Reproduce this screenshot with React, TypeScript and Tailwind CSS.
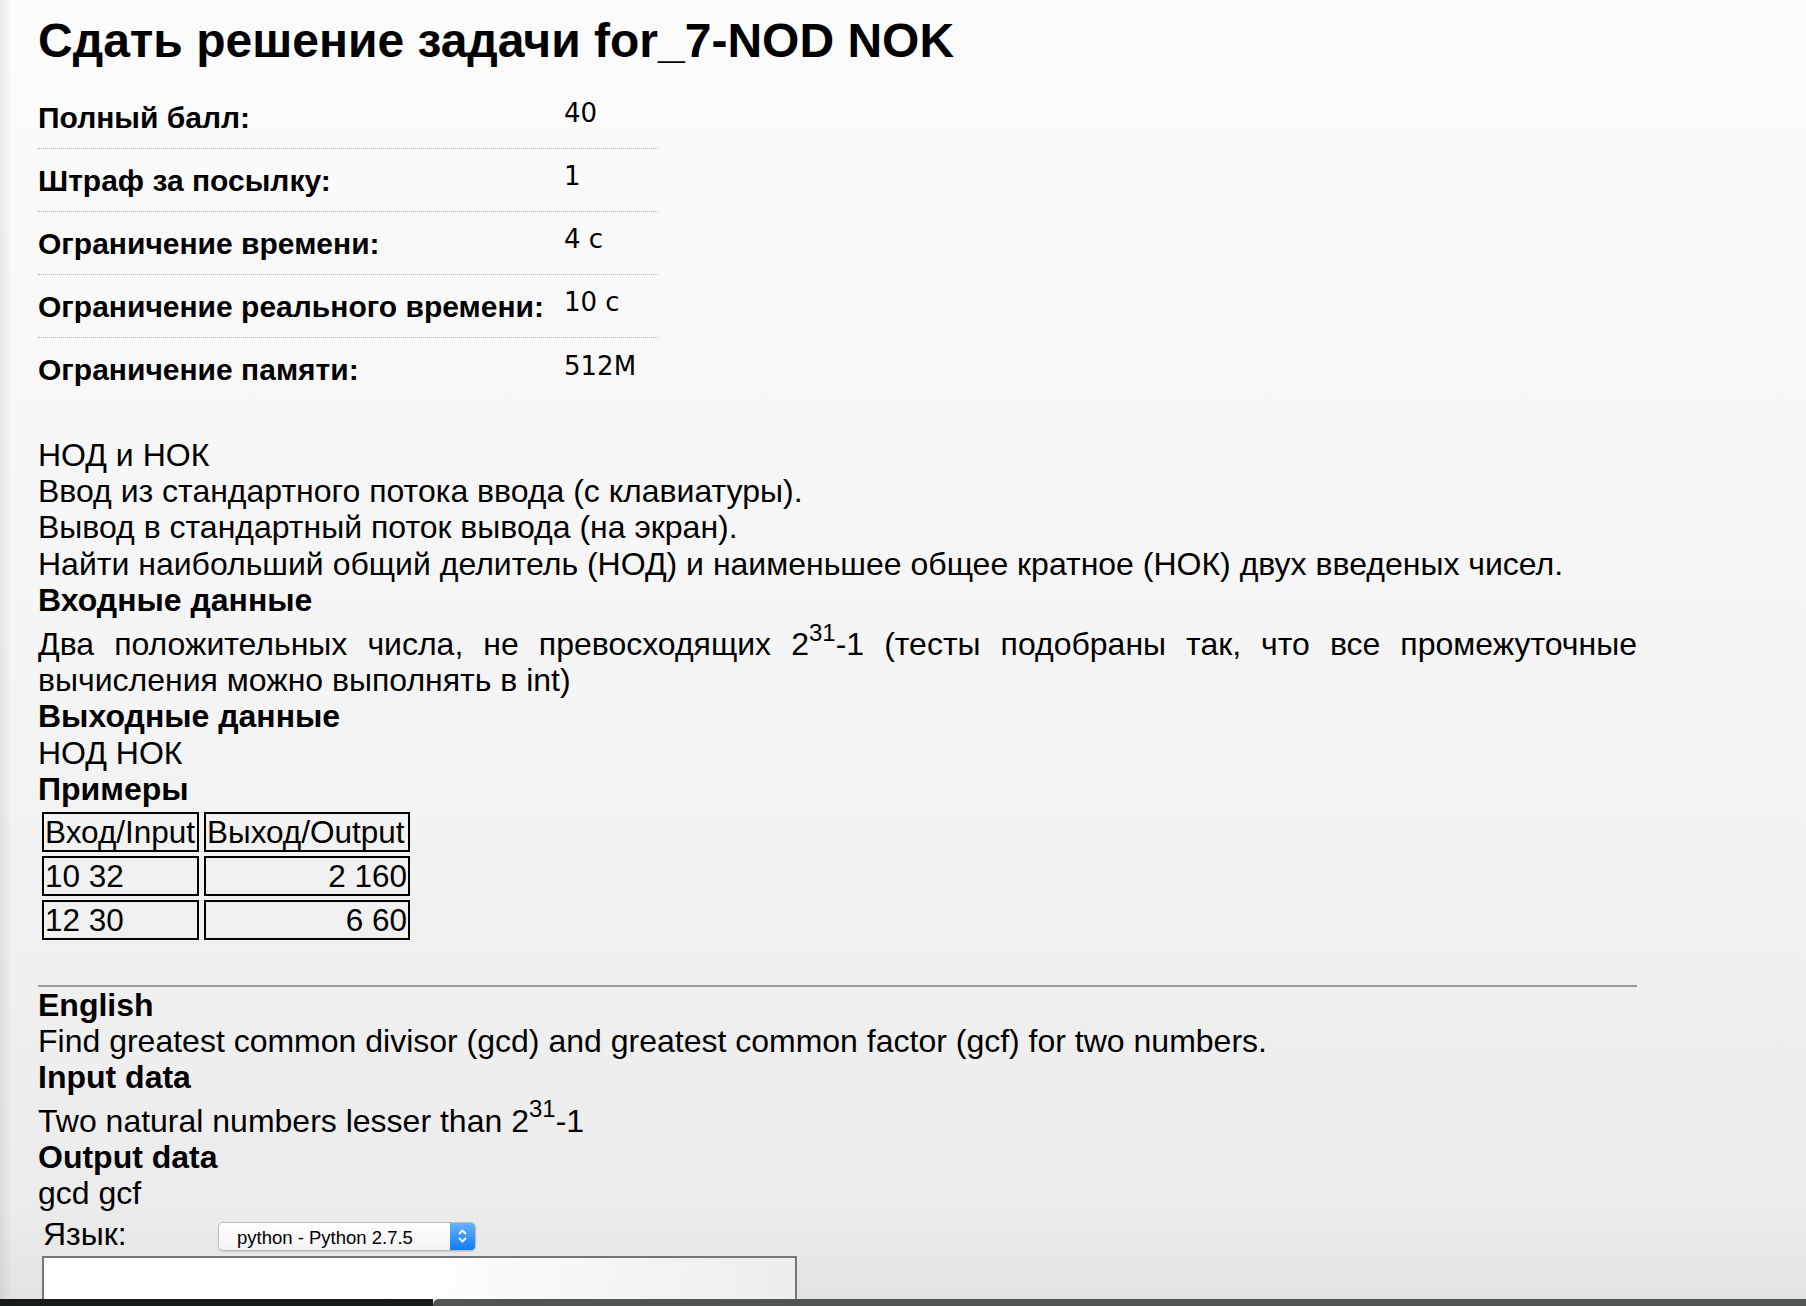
import React from "react";

const sans = { fontFamily: '"Liberation Sans", Arial, Helvetica, sans-serif' };
const verdana = { fontFamily: '"DejaVu Sans", Verdana, sans-serif' };

const infoRows: [string, string][] = [
  ["Полный балл:", "40"],
  ["Штраф за посылку:", "1"],
  ["Ограничение времени:", "4 с"],
  ["Ограничение реального времени:", "10 с"],
  ["Ограничение памяти:", "512M"],
];

function Sup({ children }: { children: React.ReactNode }) {
  return <sup className="text-[24px] top-[-0.6em]">{children}</sup>;
}

export default function App() {
  return (
    <div
      className="h-[1306px] w-full overflow-hidden flex flex-col text-black bg-[linear-gradient(to_right,rgba(0,0,0,0.07),rgba(0,0,0,0)_12px),linear-gradient(to_bottom,#fcfcfc,#f4f4f4_55%,#ececec_92%,#e2e2e2)]"
      style={sans}
    >
      <div className="flex-1 overflow-hidden">
        <div className="pl-[38px] w-[1637px]">
          <h2 className="text-[48px] font-bold leading-[55px] pt-[13px]">
            Сдать решение задачи for_7-NOD NOK
          </h2>

          <div className="mt-[18px] w-[620px]">
            {infoRows.map(([label, value], i) => (
              <div
                key={label}
                className={
                  "flex items-center h-[63px] " +
                  (i < infoRows.length - 1 ? "border-b border-dotted border-[#b0b0b0]" : "")
                }
              >
                <div className="w-[526px] text-[30px] font-bold leading-[35px]">{label}</div>
                <div className="text-[26px] leading-[30px] mb-[8px]" style={verdana}>
                  {value}
                </div>
              </div>
            ))}
          </div>

          <div className="mt-[36px] text-[32px] leading-[36.2px]">
            <div>НОД и НОК</div>
            <div>Ввод из стандартного потока ввода (с клавиатуры).</div>
            <div>Вывод в стандартный поток вывода (на экран).</div>
            <div>
              Найти наибольший общий делитель (НОД) и наименьшее общее кратное (НОК) двух введеных
              чисел.
            </div>
            <div className="font-bold">Входные данные</div>
            <p className="pt-[8px] text-justify">
              Два положительных числа, не превосходящих 2<Sup>31</Sup>-1 (тесты подобраны так, что
              все промежуточные вычисления можно выполнять в int)
            </p>
            <div className="font-bold">Выходные данные</div>
            <div>НОД НОК</div>
            <div className="font-bold">Примеры</div>

            <div className="mt-[5px] ml-[4px] grid grid-cols-[157px_206px] gap-x-[5px] gap-y-[4px] text-[31.5px]">
              <div className="border-2 border-black pl-[1px] leading-[36px] whitespace-nowrap overflow-hidden">Вход/Input</div>
              <div className="border-2 border-black pl-[1px] leading-[36px] whitespace-nowrap overflow-hidden">Выход/Output</div>
              <div className="border-2 border-black pl-[1px] leading-[36px]">10 32</div>
              <div className="border-2 border-black pr-[1px] leading-[36px] text-right">2 160</div>
              <div className="border-2 border-black pl-[1px] leading-[36px]">12 30</div>
              <div className="border-2 border-black pr-[1px] leading-[36px] text-right">6 60</div>
            </div>

            <div className="mt-[45px] h-[2px] bg-[#9b9b9b]" />

            <div className="font-bold">English</div>
            <div>Find greatest common divisor (gcd) and greatest common factor (gcf) for two numbers.</div>
            <div className="font-bold">Input data</div>
            <p className="pt-[7px]">
              Two natural numbers lesser than 2<Sup>31</Sup>-1
            </p>
            <div className="font-bold">Output data</div>
            <div>gcd gcf</div>

            <div className="mt-[5px] flex items-center">
              <div className="ml-[5px] w-[175px]">Язык:</div>
              <div className="relative mt-[4px] flex h-[29px] w-[258px] rounded-[5px] border border-[#bdbdbd] bg-[linear-gradient(to_bottom,#ffffff,#f3f3f3)] shadow-[0_1px_1px_rgba(0,0,0,0.12)] overflow-hidden">
                <div className="flex-1 pl-[18px] text-[18.5px] leading-[29px]">python - Python 2.7.5</div>
                <div className="w-[25px] flex items-center justify-center bg-[linear-gradient(to_bottom,#69b1fa,#0f7dfb)]">
                  <svg width="11" height="18" viewBox="0 0 11 18" fill="none" stroke="white" strokeWidth="1.8" strokeLinecap="round" strokeLinejoin="round">
                    <path d="M2.5 6.5 L5.5 3.5 L8.5 6.5" />
                    <path d="M2.5 11.5 L5.5 14.5 L8.5 11.5" />
                  </svg>
                </div>
              </div>
            </div>

            <div className="mt-[4px] ml-[4px] w-[755px] h-[90px] border-2 border-[#767676] border-b-0 bg-[linear-gradient(100deg,#ffffff_45%,#ededed)]" />
          </div>
        </div>
      </div>

      <div className="h-[7px] flex shrink-0">
        <div className="w-[433px] bg-[#161b18]" />
        <div className="flex-1 bg-[#4f5552] rounded-tl-[6px]" />
      </div>
    </div>
  );
}
